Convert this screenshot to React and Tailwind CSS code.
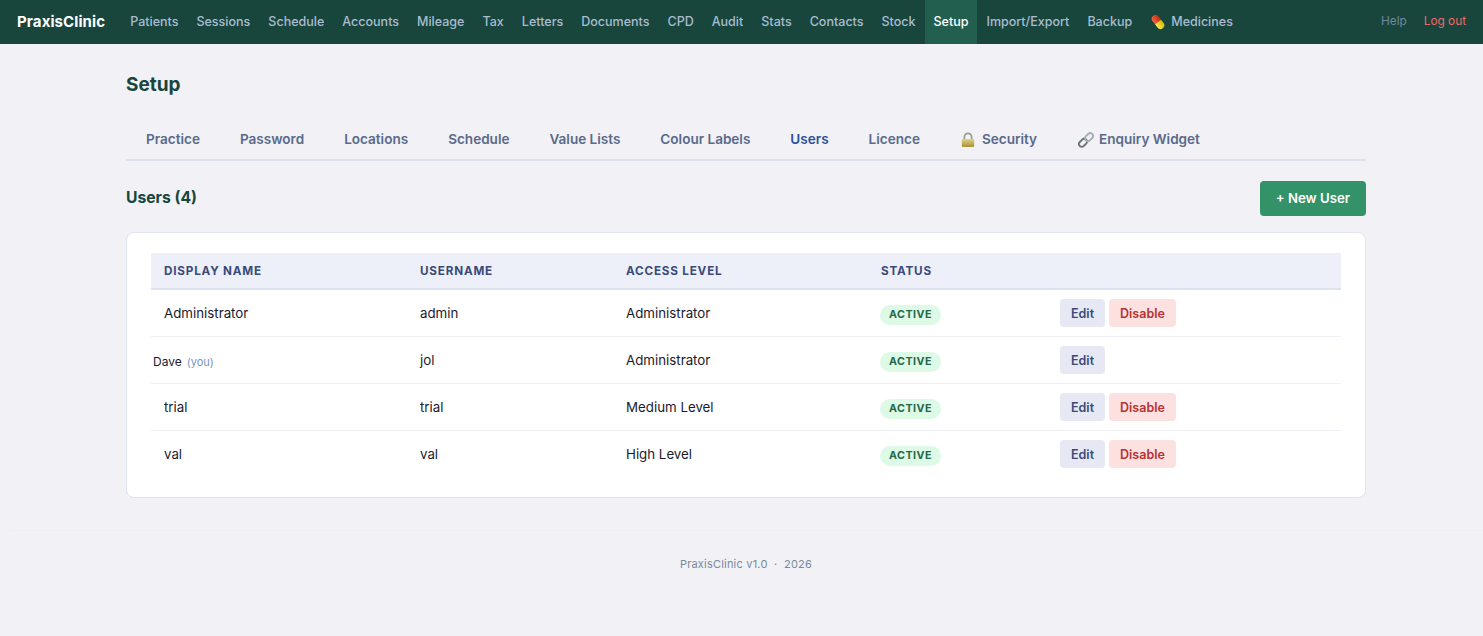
import React from 'react';

const navItems = ['Patients', 'Sessions', 'Schedule', 'Accounts', 'Mileage', 'Tax', 'Letters', 'Documents', 'CPD', 'Audit', 'Stats', 'Contacts', 'Stock', 'Setup', 'Import/Export', 'Backup'];
const tabs = ['Practice', 'Password', 'Locations', 'Schedule', 'Value Lists', 'Colour Labels', 'Users', 'Licence'];
const users = [
  { name: 'Administrator', username: 'admin', level: 'Administrator', disable: true },
  { name: 'Dave', you: true, username: 'jol', level: 'Administrator', disable: false },
  { name: 'trial', username: 'trial', level: 'Medium Level', disable: true },
  { name: 'val', username: 'val', level: 'High Level', disable: true },
];

function PillIcon() {
  return (
    <svg width="16" height="16" viewBox="0 0 16 16" className="shrink-0">
      <defs>
        <linearGradient id="pillRed" x1="0" x2="1" y1="0" y2="0">
          <stop offset="0" stopColor="#f0683e" />
          <stop offset="1" stopColor="#c92a14" />
        </linearGradient>
        <linearGradient id="pillYellow" x1="0" x2="1" y1="0" y2="0">
          <stop offset="0" stopColor="#fbe84a" />
          <stop offset="1" stopColor="#dcb414" />
        </linearGradient>
      </defs>
      <g transform="rotate(-38 8 8)">
        <path d="M4.2 8V4a3.8 3.8 0 0 1 7.6 0v4z" fill="url(#pillRed)" />
        <path d="M4.2 8h7.6v4a3.8 3.8 0 0 1-7.6 0z" fill="url(#pillYellow)" />
      </g>
    </svg>
  );
}

function LockIcon() {
  return (
    <svg width="16" height="16" viewBox="0 0 16 16" className="shrink-0">
      <defs>
        <linearGradient id="lockBody" x1="0" x2="0" y1="0" y2="1">
          <stop offset="0" stopColor="#e2d28a" />
          <stop offset="1" stopColor="#a98f36" />
        </linearGradient>
      </defs>
      <path d="M4.4 7.5V4.9a3.6 3.6 0 0 1 7.2 0v2.6" fill="none" stroke="#9a9a8e" strokeWidth="1.7" />
      <rect x="1.8" y="7" width="12.4" height="8" rx="1" fill="url(#lockBody)" />
    </svg>
  );
}

function LinkIcon() {
  return (
    <svg width="18" height="18" viewBox="0 0 18 18" className="shrink-0">
      <g fill="none" strokeLinecap="round">
        <rect x="1.5" y="9" width="9" height="5.6" rx="2.8" transform="rotate(-45 6 11.8)" stroke="#6f747a" strokeWidth="1.9" />
        <rect x="7.5" y="3.4" width="9" height="5.6" rx="2.8" transform="rotate(-45 12 6.2)" stroke="#a9aeb3" strokeWidth="1.9" />
      </g>
    </svg>
  );
}

function Header() {
  return (
    <header className="flex h-11 items-stretch bg-[#18463c] pl-[17px] pr-[17px]">
      <div className="mr-4 flex items-center text-[15px] font-bold tracking-[0.1px] text-white">PraxisClinic</div>
      <nav className="flex items-stretch">
        {navItems.map(item => (
          <a key={item} className={item === 'Setup'
            ? 'flex items-center bg-[#235f4f] px-[9px] text-[12.53px] font-medium text-white'
            : 'flex items-center px-[9px] text-[12.53px] font-medium text-[#a9bcd0]'}>
            {item}
          </a>
        ))}
        <a className="flex items-center gap-[5px] px-[9px] text-[12.53px] font-medium text-[#a9bcd0]">
          <PillIcon /> Medicines
        </a>
      </nav>
      <div className="ml-auto flex items-center gap-[17px] text-[11.8px]">
        <a className="text-[#71899a]">Help</a>
        <a className="text-[#f56565]">Log out</a>
      </div>
    </header>
  );
}

function Tabs() {
  return (
    <div className="mt-[21px] flex h-[43px] border-b-2 border-[#dde2ee] pt-0.5 text-[13.55px] font-semibold text-[#5a6a8a]">
      {tabs.map(tab => (
        <a key={tab} className={tab === 'Users' ? 'flex items-center px-5 text-[#2c5296]' : 'flex items-center px-5'}>
          {tab}
        </a>
      ))}
      <a className="flex items-center gap-1.5 px-5"><LockIcon /> Security</a>
      <a className="flex items-center gap-1 px-5"><LinkIcon /> Enquiry Widget</a>
    </div>
  );
}

function UsersTable() {
  return (
    <div className="mt-[16px] rounded-lg border border-[#e0e4ee] bg-white px-6 pb-5 pt-5">
      <table className="w-full table-fixed border-collapse text-[13.3px] text-[#1a1a2e]">
        <colgroup>
          <col className="w-[256px]" />
          <col className="w-[206px]" />
          <col className="w-[255px]" />
          <col className="w-[179px]" />
          <col />
        </colgroup>
        <thead>
          <tr className="h-[36px] border-b-2 border-[#dde2ee] bg-[#edf0f8] text-left text-[11.7px] font-bold tracking-[0.8px] text-[#3a4a7a]">
            <th className="px-[13px] pt-0.5 font-bold">DISPLAY NAME</th>
            <th className="px-[13px] pt-0.5 font-bold">USERNAME</th>
            <th className="px-[13px] pt-0.5 font-bold">ACCESS LEVEL</th>
            <th className="px-[13px] pt-0.5 font-bold">STATUS</th>
            <th></th>
          </tr>
        </thead>
        <tbody>
          {users.map(u => (
            <tr key={u.username} className="h-[47px] border-b border-[#eef0f6] last:border-b-0">
              {u.you ? (
                <td className="px-0.5 pt-1 text-xs">
                  {u.name}
                  <span className="ml-[5px] text-[11px] text-[#7a94c4]">(you)</span>
                </td>
              ) : (
                <td className="px-[13px] pt-[3px]">{u.name}</td>
              )}
              <td className="px-[13px] pt-[3px]">{u.username}</td>
              <td className="px-[13px] pt-[3px]">{u.level}</td>
              <td className="px-3 pt-1">
                <span className="inline-block rounded-full bg-[#dcfae6] px-[9px] py-[2px] text-[10.7px] font-bold tracking-[0.5px] text-[#276749]">ACTIVE</span>
              </td>
              <td className="px-[13px]">
                <div className="flex gap-1">
                  <button className="h-7 rounded bg-[#e6e8f4] px-[11px] pt-1 text-[12.5px] font-semibold text-[#3a4a7a]">Edit</button>
                  {u.disable && (
                    <button className="h-7 rounded bg-[#fde0e0] px-[11px] pt-1 text-[12.5px] font-semibold text-[#b83232]">Disable</button>
                  )}
                </div>
              </td>
            </tr>
          ))}
        </tbody>
      </table>
    </div>
  );
}

export default function App() {
  return (
    <div className="flex min-h-[636px] flex-col bg-[#f1f1f6] font-['Inter',sans-serif]">
      <Header />
      <div className="pl-[9px]">
        <main className="mx-auto w-[1240px] pt-[29px]">
          <h1 className="text-[19px] leading-6 font-bold text-[#18463c]">Setup</h1>
          <Tabs />
          <div className="mt-[20px] flex h-[35px] items-center justify-between">
            <h2 className="pb-px text-[15.7px] font-bold text-[#18463c]">Users (4)</h2>
            <button className="h-[35px] rounded bg-[#339268] px-4 text-[13.2px] font-semibold text-white">+ New User</button>
          </div>
          <UsersTable />
        </main>
        <footer className="mt-8 border-t border-[#eeeef4] pt-[25px] text-center text-[11px] leading-4 tracking-[0.2px] text-[#7a8a9a]">
          PraxisClinic v1.0 &nbsp;·&nbsp; 2026
        </footer>
      </div>
    </div>
  );
}
